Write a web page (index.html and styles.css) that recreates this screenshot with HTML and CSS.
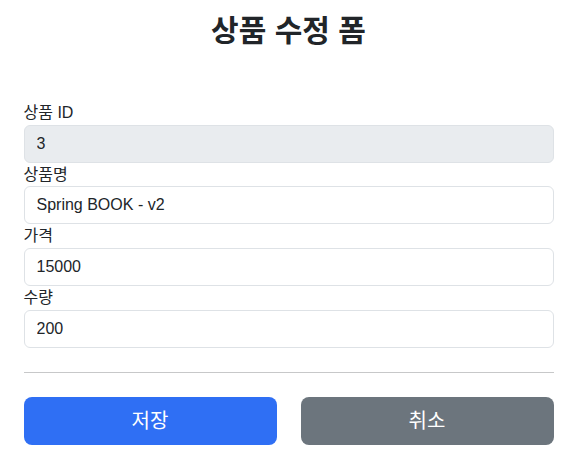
FILE: index.html
```html
<!DOCTYPE html>
<html lang="ko">
<head>
  <meta charset="UTF-8" />
  <meta name="viewport" content="width=device-width, initial-scale=1.0" />
  <title>상품 수정 폼</title>
  <link rel="stylesheet" href="styles.css">
</head>
<body>
  <div class="container">
    <div class="page-title">
      <h2>상품 수정 폼</h2>
    </div>

    <form action="#" method="post">
      <div>
        <label for="id">상품 ID</label>
        <input type="text" id="id" name="id" class="form-control" value="3" readonly>
      </div>
      <div>
        <label for="itemName">상품명</label>
        <input type="text" id="itemName" name="itemName" class="form-control" value="Spring BOOK - v2">
      </div>
      <div>
        <label for="price">가격</label>
        <input type="text" id="price" name="price" class="form-control" value="15000">
      </div>
      <div>
        <label for="quantity">수량</label>
        <input type="text" id="quantity" name="quantity" class="form-control" value="200">
      </div>

      <hr class="divider">

      <div class="row">
        <button class="btn btn-primary" type="submit">저장</button>
        <button class="btn btn-secondary" type="button">취소</button>
      </div>
    </form>
  </div>
</body>
</html>
```

FILE: styles.css
```css
* {
  box-sizing: border-box;
}
body {
  margin: 0;
  font-family: 'Liberation Sans', 'Noto Sans CJK KR', sans-serif;
  font-size: 16px;
  line-height: 1.5;
  color: #212529;
  background-color: #fff;
}
.container {
  max-width: 560px;
  margin: 0 auto;
  padding: 0 15px;
}
.page-title {
  text-align: center;
  padding: 9px 0 46px;
}
.page-title h2 {
  margin: 0 0 8px;
  height: 38px;
  font-family: 'Noto Sans CJK KR', sans-serif;
  font-size: 30px;
  font-weight: 700;
  line-height: 38px;
}
label {
  display: block;
  height: 23.7px;
  line-height: 24px;
}
.form-control {
  display: block;
  width: 100%;
  height: 38px;
  padding: 6px 12px;
  font-family: inherit;
  font-size: 16px;
  line-height: 1.5;
  color: #212529;
  background-color: #fff;
  border: 1px solid #dee2e6;
  border-radius: 6px;
}
.form-control[readonly] {
  background-color: #e9ecef;
}
.divider {
  margin: 24px 0;
  border: 0;
  border-top: 1px solid #212529;
  opacity: 0.25;
}
.row {
  display: grid;
  grid-template-columns: 1fr 1fr;
  gap: 24px;
}
.btn {
  width: 100%;
  height: 48px;
  padding: 0 16px;
  font-family: inherit;
  font-size: 20px;
  line-height: 46px;
  color: #fff;
  border: 1px solid transparent;
  border-radius: 8px;
  cursor: pointer;
}
.btn-primary {
  background-color: #2f6ff4;
}
.btn-secondary {
  background-color: #6c757d;
}
```
